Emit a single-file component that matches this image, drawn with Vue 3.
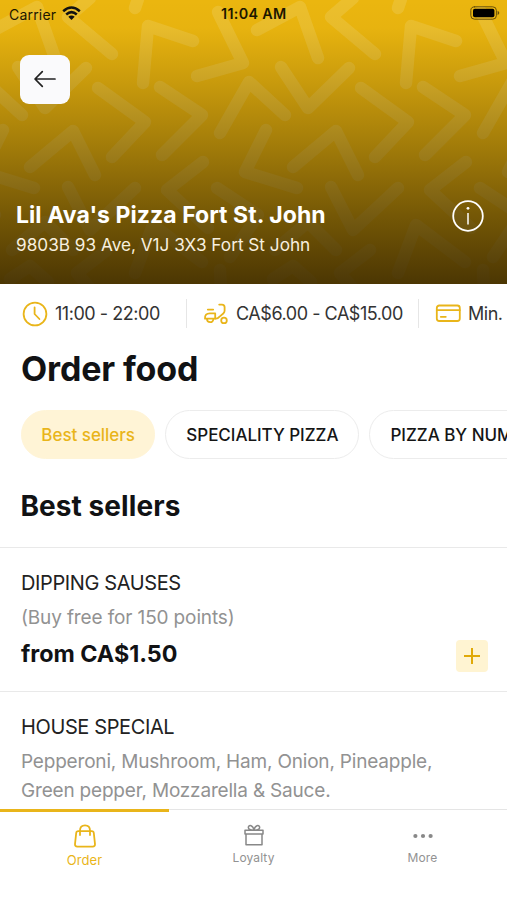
<script setup>
const chevrons = [
  'M353 -2 L331 17 L375 54', 'M257 30 L300 7 L318 58', 'M143 83 L148 26 L193 41',
  'M218 12 L243 63 L197 76', 'M141 -10 L135 8', 'M281 67 L308 108 L349 68',
  'M361 88 L408 122 L375 157', 'M423 87 L465 115 L425 155', 'M220 133 L249 82 L285 115',
  'M266 130 L245 172 L297 188', 'M293 167 L336 131 L358 175', 'M466 162 L430 190 L471 228',
  'M331 187 L353 230 L398 188', 'M398 273 L416 225 L465 262', 'M217 188 L258 215 L230 257',
  'M275 250 L308 222 L336 250', 'M370 250 L340 273 L356 292', 'M273 279 L293 266 L311 282',
  'M483 270 L484 290',
]
const offsets = [-526, -263, 0, 263]
const categories = ['Best sellers', 'SPECIALITY PIZZA', 'PIZZA BY NUMBERS']
</script>

<template>
  <div class="screen">
    <header class="hero">
      <svg class="pattern" viewBox="0 0 507 284" aria-hidden="true">
        <g v-for="o in offsets" :key="o" :transform="`translate(${o} 0)`">
          <path v-for="d in chevrons" :key="d" :d="d" />
        </g>
      </svg>
      <div class="hero-body">
        <div class="status">
          <span class="carrier">Carrier</span>
          <svg class="wifi" width="19" height="15" viewBox="0 0 19 15">
            <path d="M1.2 5.3 Q9.5 -2.2 17.8 5.3" /><path d="M4.2 8.5 Q9.5 3.8 14.8 8.5" />
            <path class="dot" d="M6.3 10.7 Q9.5 8.1 12.7 10.7 L9.5 14 Z" />
          </svg>
          <span class="time">11:04 AM</span>
          <svg class="battery" width="30" height="14" viewBox="0 0 30 14">
            <rect class="shell" x=".8" y=".8" width="25.6" height="12.4" rx="3.7" />
            <rect x="3" y="2.8" width="21.4" height="8.5" rx="1.8" /><path class="tip" d="M27.6 4.8 Q31 7 27.6 9.2 Z" />
          </svg>
        </div>
        <button class="back" aria-label="Back">
          <svg width="24" height="20" viewBox="0 0 24 20"><path d="M22 10H2.2M9.3 2.7L2 10l7.3 7.3" /></svg>
        </button>
        <div class="place">
          <div>
            <h1>Lil Ava's Pizza Fort St. John</h1>
            <p>9803B 93 Ave, V1J 3X3 Fort St John</p>
          </div>
          <svg class="info" width="32" height="32" viewBox="0 0 32 32">
            <circle cx="16" cy="16" r="14.8" /><path class="stem" d="M16 13v11.5" /><circle class="point" cx="16" cy="8.3" r="1.4" />
          </svg>
        </div>
      </div>
    </header>

    <section class="facts">
      <div class="fact hours">
        <svg width="26" height="26" viewBox="0 0 26 26"><circle cx="13" cy="13" r="11.4" /><path d="M12.6 6.4V13l4.8 5" /></svg>
        <span>11:00 - 22:00</span>
      </div>
      <div class="fact delivery">
        <svg width="26" height="22" viewBox="0 0 26 22">
          <path d="M4.8 6.6h5.4M2 15.6q-.3-5.3 4.8-5.3h5.4v5.3zM4 16a3.2 3.2 0 0 0 6.4 0" />
          <path d="M16.2 1.6H19q2.6 0 2.6 2.6v3.6q0 1.6-1.3 2.7l-3.7 3.1q-1.8 2-3.6 2h-.8" />
          <circle cx="21" cy="17.4" r="2.8" />
        </svg>
        <span>CA$6.00 - CA$15.00</span>
      </div>
      <div class="fact minimum">
        <svg width="26" height="19" viewBox="0 0 26 19"><rect x="1.8" y="1.5" width="23" height="15.5" rx="2.5" /><path d="M1.8 6.2h23M5.8 12.8h5" /></svg>
        <span>Min.</span>
      </div>
    </section>

    <main>
      <h2>Order food</h2>
      <nav class="chips">
        <button v-for="(c, i) in categories" :key="c" class="chip" :class="{ active: i === 0 }">{{ c }}</button>
      </nav>
      <h3>Best sellers</h3>
      <article class="item">
        <h4>DIPPING SAUSES</h4>
        <p class="points">(Buy free for 150 points)</p>
        <div class="buy">
          <strong>from CA$1.50</strong>
          <button class="add" aria-label="Add"><svg width="18" height="18" viewBox="0 0 18 18"><path d="M9 1v16M1 9h16" /></svg></button>
        </div>
      </article>
      <article class="item special">
        <h4>HOUSE SPECIAL</h4>
        <p class="desc">Pepperoni, Mushroom, Ham, Onion, Pineapple,<br>Green pepper, Mozzarella &amp; Sauce.</p>
      </article>
    </main>

    <footer class="tabs">
      <div class="tab current">
        <svg width="24" height="26" viewBox="0 0 24 26"><path d="M5.2 8.2h13.6q1.8 0 2 1.8l1.2 11q.2 2.6-2.3 2.6H4.3Q1.8 23.6 2 21L3.2 10q.2-1.8 2-1.8z" /><path d="M7 12V7.5q0-5.2 5-5.2t5 5.2V12" /></svg>
        <span>Order</span>
      </div>
      <div class="tab">
        <svg width="22" height="23" viewBox="0 0 22 23"><path d="M2 6.3h18v3.8H2zM3 10.1v10.7h16V10.1M11 6.2C7.5 6.2 5 5 5.4 3 6 .5 10 1 11 6.2zM11 6.2c3.5 0 6-1.2 5.6-3.2C16 .5 12 1 11 6.2z" /></svg>
        <span>Loyalty</span>
      </div>
      <div class="tab">
        <svg class="dots" width="22" height="23" viewBox="0 0 22 23"><circle cx="3.4" cy="12" r="2.1" /><circle cx="11" cy="12" r="2.1" /><circle cx="18.6" cy="12" r="2.1" /></svg>
        <span>More</span>
      </div>
    </footer>
  </div>
</template>

<style>
body { margin: 0; background: #fff; }
</style>
<style scoped>
* { box-sizing: border-box; }
h1, h2, h3, h4, p { margin: 0; white-space: nowrap; }
button { border: 0; padding: 0; font: inherit; }
svg { display: block; flex: none; fill: none; stroke-linecap: round; stroke-linejoin: round; }
.screen { width: 507px; height: 900px; overflow: hidden; display: flex; flex-direction: column; background: #fff; font-family: Inter, "Liberation Sans", sans-serif; color: #111214; }
.hero { position: relative; height: 284px; flex: none; background: #ebb60f; overflow: hidden; }
.pattern { position: absolute; inset: 0; width: 507px; height: 284px; stroke: #f1d067; stroke-opacity: .33; stroke-width: 12.5px; }
.hero-body { position: relative; height: 284px; display: flex; flex-direction: column; background: linear-gradient(180deg, rgba(45,30,0,0) 0, rgba(45,30,0,.02) 28px, rgba(45,30,0,.2) 88px, rgba(45,30,0,.38) 145px, rgba(45,30,0,.62) 215px, rgba(45,30,0,.84) 284px); }
.status { height: 28px; display: flex; align-items: center; padding: 0 7px 0 9px; font-size: 14px; color: #1c1700; }
.carrier { width: 49px; letter-spacing: .2px; }
.wifi { margin-left: 4px; margin-top: -2px; stroke: #111; stroke-width: 2.5px; stroke-linecap: butt; }
.wifi .dot { fill: #111; stroke: none; }
.time { margin-left: 140px; margin-top: -1px; font-weight: 600; font-size: 14.3px; letter-spacing: .35px; }
.battery { margin-left: auto; margin-top: -2px; fill: #000; }
.battery .shell { fill: none; stroke: #67500a; stroke-width: 1; }
.battery .tip { fill: #67500a; }
.back { width: 50px; height: 49px; margin: 27px 0 0 20px; border-radius: 9px; background: #fafafc; display: flex; align-items: center; justify-content: center; }
.back svg { stroke: #222; stroke-width: 1.7px; margin-top: -1px; }
.place { display: flex; justify-content: space-between; align-items: flex-start; margin: 97px 23px 0 16px; color: #fff; }
h1 { font-size: 23px; line-height: 28px; font-weight: 700; letter-spacing: .06px; }
.place p { margin-top: 5px; font-size: 17.2px; line-height: 22px; color: #f7efdf; }
.info { margin-top: -1px; stroke: #fff; stroke-width: 1.8px; }
.info .stem { stroke-width: 1.5px; stroke-linecap: butt; }
.info .point { fill: #fff; stroke: none; }
.facts { height: 59px; flex: none; display: flex; align-items: center; padding-left: 22px; font-size: 18px; letter-spacing: -.46px; color: #333; }
.fact { height: 29px; display: flex; align-items: center; flex: none; white-space: nowrap; }
.fact svg { stroke: #e9b51a; stroke-width: 1.8px; }
.hours { width: 165px; gap: 7px; border-right: 1.5px solid #e6e6e6; }
.delivery { width: 232px; padding-left: 16px; gap: 7px; border-right: 1.5px solid #e6e6e6; }
.minimum { padding-left: 16px; gap: 7px; }
main { flex: 1; min-height: 0; overflow: hidden; }
h2 { padding: 6px 0 0 21px; font-size: 34px; line-height: 40px; font-weight: 700; letter-spacing: -.15px; }
.chips { margin-top: 21px; padding-left: 21px; display: flex; gap: 10px; overflow: hidden; }
.chip { height: 49px; flex: none; padding: 0 20px; border: 1px solid #ececec; border-radius: 25px; background: #fff; color: #151515; font-size: 17px; font-weight: 500; white-space: nowrap; letter-spacing: -.03px; }
.chip.active { padding: 0 19.3px; background: #fff4d6; border-color: #fff4d6; color: #e9b51a; }
h3 { height: 88px; padding: 29px 0 0 20.5px; font-size: 28px; line-height: 36px; font-weight: 700; letter-spacing: .07px; }
.item { border-top: 1.5px solid #e9e9e9; padding: 22px 19px 0 21px; height: 144px; }
h4 { font-size: 20px; line-height: 26px; font-weight: 400; color: #222; letter-spacing: -.38px; }
.points, .desc { color: #929292; font-size: 19px; line-height: 29px; margin-top: 7px; letter-spacing: -.13px; }
.desc { letter-spacing: -.19px; }
.buy { display: flex; justify-content: space-between; align-items: center; margin-top: 7px; height: 33px; }
.buy strong { font-size: 23.3px; line-height: 30px; margin-top: -4px; }
.add { width: 32px; height: 32px; border-radius: 4px; background: #fff4d2; display: flex; align-items: center; justify-content: center; }
.add svg { stroke: #e0a908; stroke-width: 2; stroke-linecap: butt; }
.tabs { height: 91px; flex: none; display: grid; grid-template-columns: repeat(3, 1fr); border-top: 1px solid #e5e5e5; }
.tab { padding-top: 14px; display: flex; flex-direction: column; align-items: center; font-size: 12px; line-height: 16px; letter-spacing: .12px; color: #929292; }
.tab svg { stroke: #888; stroke-width: 1.5px; }
.tab span { margin-top: 3px; }
.tab.current { margin-top: -1px; padding-top: 11px; border-top: 3px solid #e9b51a; color: #e9b51a; font-size: 13px; }
.tab.current svg { stroke: #e9b51a; stroke-width: 1.8px; }
.tab .dots { fill: #888; stroke: none; }
</style>
